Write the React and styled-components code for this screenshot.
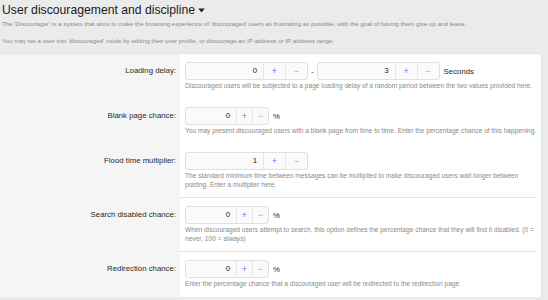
import styled, { createGlobalStyle } from 'styled-components';

const GlobalStyle = createGlobalStyle`
  html, body {
    margin: 0;
    padding: 0;
    background: #ebebeb;
    font-family: 'Liberation Sans', Arial, sans-serif;
    color: #1e1e1e;
  }
`;

const rows = [
  {
    label: 'Loading delay:',
    inputs: ['0', '3'],
    size: 'wide',
    unit: 'Seconds',
    help: ['Discouraged users will be subjected to a page loading delay of a random period between the two values provided here.'],
  },
  {
    label: 'Blank page chance:',
    inputs: ['0'],
    size: 'narrow',
    unit: '%',
    help: ['You may present discouraged users with a blank page from time to time. Enter the percentage chance of this happening.'],
  },
  {
    label: 'Flood time multiplier:',
    inputs: ['1'],
    size: 'wide',
    help: [
      'The standard minimum time between messages can be multiplied to make discouraged users wait longer between',
      'posting. Enter a multiplier here.',
    ],
    separated: true,
  },
  {
    label: 'Search disabled chance:',
    inputs: ['0'],
    size: 'narrow',
    unit: '%',
    help: [
      'When discouraged users attempt to search, this option defines the percentage chance that they will find it disabled. (0 =',
      'never, 100 = always)',
    ],
    separated: true,
  },
  {
    label: 'Redirection chance:',
    inputs: ['0'],
    size: 'narrow',
    unit: '%',
    help: ['Enter the percentage chance that a discouraged user will be redirected to the redirection page.'],
  },
];

const Caret = () => (
  <svg width='7' height='5' viewBox='0 0 7 5'>
    <path d='M0.3 0.6 L6.7 0.6 L3.5 4.6 Z' fill='#1e1e1e' />
  </svg>
);

const Spinner = ({ value, size }) => (
  <SpinBox>
    <SpinField $size={size}>{value}</SpinField>
    <SpinButton $size={size} $kind='up'>+</SpinButton>
    <SpinButton $size={size} $kind='down'>−</SpinButton>
  </SpinBox>
);

const App = () => {
  return (
    <Page>
      <GlobalStyle />
      <Header>
        <Title>
          User discouragement and discipline <Caret />
        </Title>
        <Intro>
          The 'Discourager' is a system that aims to make the browsing experience of 'discouraged' users as
          frustrating as possible, with the goal of having them give up and leave.
        </Intro>
        <Intro>
          You may set a user into 'discouraged' mode by editing their user profile, or discourage an IP address or IP
          address range.
        </Intro>
      </Header>

      <Panel>
        {rows.map((row) => (
          <Row key={row.label}>
            <Label>{row.label}</Label>
            <Field $separated={row.separated}>
              <Controls>
                {row.inputs.map((v, i) => (
                  <Controls key={i}>
                    {i > 0 && <Dash>-</Dash>}
                    <Spinner value={v} size={row.size} />
                  </Controls>
                ))}
                {row.unit && <Unit>{row.unit}</Unit>}
              </Controls>
              <Help>
                {row.help.map((line) => (
                  <div key={line}>{line}</div>
                ))}
              </Help>
            </Field>
          </Row>
        ))}
      </Panel>
    </Page>
  );
};

const Page = styled.div`
  width: 548px;
  height: 300px;
  overflow: hidden;
`;

const Header = styled.div`
  padding: 2px 0 0 2px;
`;

const Title = styled.h1`
  margin: 0;
  font-size: 12.2px;
  line-height: 16px;
  font-weight: 400;
  color: #1a1a1a;
  display: flex;
  align-items: center;
  gap: 3px;

  svg {
    margin-top: 1px;
  }
`;

const Intro = styled.p`
  margin: 1px 0 8px;
  font-size: 6.2px;
  line-height: 9px;
  color: #8a8a8a;
  white-space: nowrap;

  & + & {
    margin-top: 0;
  }
`;

const Panel = styled.section`
  width: 542px;
  margin-top: 7px;
  background: #ffffff;
  border-top: 1px solid #e2e2e2;
  border-right: 1px solid #e2e2e2;
  border-radius: 0 3px 0 0;
  box-sizing: border-box;
`;

const Row = styled.div`
  display: grid;
  grid-template-columns: 180px 1fr;
`;

const Label = styled.div`
  background: #f5f5f5;
  text-align: right;
  padding: 8px 4px 0 0;
  font-size: 7.8px;
  line-height: 18px;
  color: #2a2a2a;
`;

const Field = styled.div`
  padding: 8px 0 8px 5px;
  margin-right: 5px;
  border-bottom: 1px solid ${(p) => (p.$separated ? '#e4e4e4' : 'transparent')};
`;

const Controls = styled.div`
  display: flex;
  align-items: center;
`;

const SpinBox = styled.div`
  display: flex;
  height: 18px;
  box-sizing: border-box;
  border: 1px solid #e0e0e0;
  border-radius: 3px;
  background: #fafafa;
  overflow: hidden;
`;

const SpinField = styled.div`
  width: ${(p) => (p.$size === 'wide' ? '77px' : '50px')};
  box-sizing: border-box;
  padding-right: 6px;
  text-align: right;
  font-size: 7.8px;
  line-height: 16px;
  color: #222;
`;

const SpinButton = styled.div`
  width: ${(p) => (p.$size === 'wide' ? '21px' : '15px')};
  border-left: 1px solid #e6e6e6;
  display: flex;
  align-items: center;
  justify-content: center;
  font-size: 9px;
  line-height: 16px;
  color: ${(p) => (p.$kind === 'up' ? '#a15bd8' : '#d190e0')};
`;

const Dash = styled.span`
  font-size: 7.8px;
  color: #333;
  margin: 0 3px;
`;

const Unit = styled.span`
  font-size: 7.8px;
  color: #1e1e1e;
  margin-left: 4px;
`;

const Help = styled.div`
  margin-top: 1px;
  font-size: 6.6px;
  line-height: 9px;
  color: #8a8a8a;
  white-space: nowrap;
`;

export default App;
